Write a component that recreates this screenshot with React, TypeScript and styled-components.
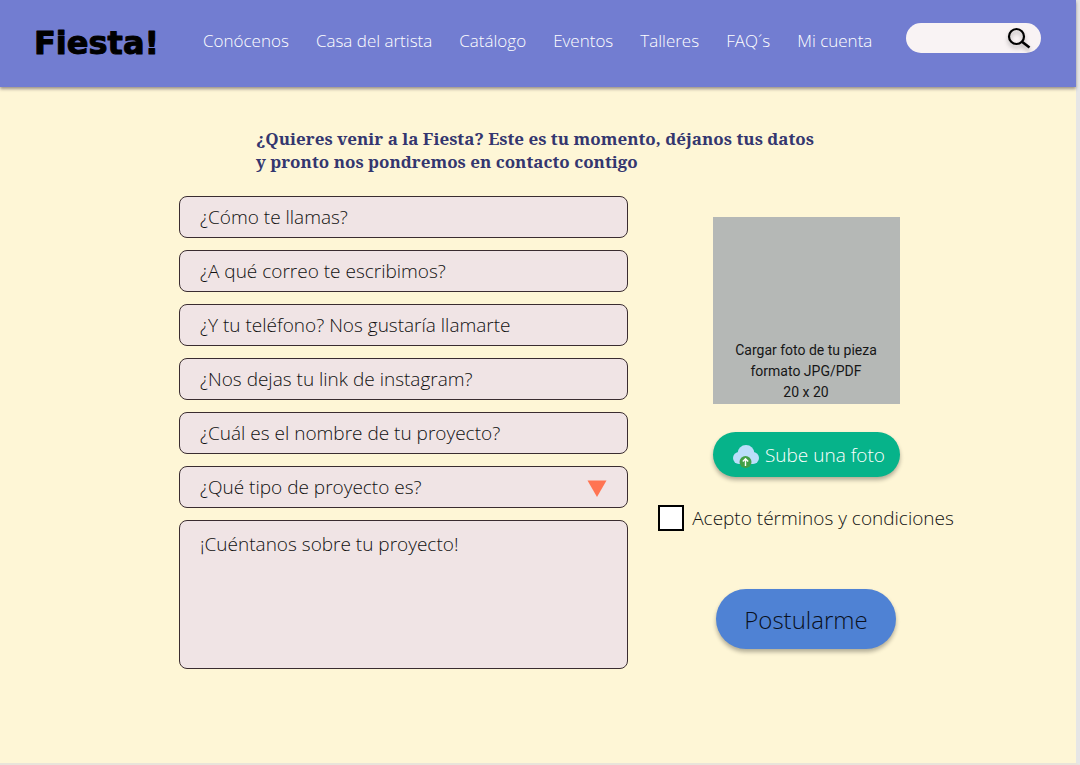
import React from "react";
import styled, { createGlobalStyle } from "styled-components";

const GlobalStyle = createGlobalStyle`
  *, *::before, *::after { box-sizing: border-box; }
  body { margin: 0; background: #fef6d6; }
  body, button, input, select, textarea { font-family: "Open Sans", sans-serif; font-weight: 300; }
`;

const Page = styled.div`
  min-height: 100vh;
  background: #fef6d6;
  border-right: 4px solid #e6e6e6;
  border-bottom: 2px solid #e9e4da;
`;

const Header = styled.header`
  display: flex;
  align-items: flex-start;
  height: 87px;
  padding: 0 35px 0 34px;
  background: #727dd1;
  box-shadow: 0 2px 3px rgba(60, 50, 60, 0.5);
`;

const Logo = styled.a`
  flex: 0 0 169px;
  padding-top: 14px;

  svg { display: block; }
  text {
    font-family: "DejaVu Sans", sans-serif;
    font-size: 32px;
    font-weight: 700;
    fill: #000;
    stroke: #000;
    stroke-width: 1px;
    stroke-linejoin: round;
  }
`;

const Nav = styled.nav`
  display: flex;
  gap: 27px;
  padding-top: 29px;
`;

const NavLink = styled.a`
  color: #fff;
  font-size: 17px;
  line-height: 24px;
  text-decoration: none;
  white-space: nowrap;
`;

const Search = styled.form`
  display: flex;
  align-items: center;
  width: 135px;
  height: 30px;
  margin: 23px 0 0 auto;
  padding: 0 10px 0 14px;
  border-radius: 15px;
  background: #f9f3f4;
`;

const SearchInput = styled.input`
  flex: 1;
  min-width: 0;
  padding: 0;
  border: 0;
  outline: 0;
  background: transparent;
  font-size: 14px;
`;

const SearchButton = styled.button`
  display: flex;
  padding: 0;
  border: 0;
  background: transparent;

  svg { filter: drop-shadow(0 3px 2px rgba(0, 0, 0, 0.3)); }
`;

const Main = styled.main`
  padding: 40px 124px 64px 179px;
`;

const Heading = styled.h1`
  margin: 0 0 23px;
  padding-left: 77px;
  color: #34366f;
  font-family: "Noto Serif", "Liberation Serif", serif;
  font-size: 17px;
  font-weight: 700;
  line-height: 23px;
`;

const Form = styled.form`
  display: grid;
  grid-template-columns: minmax(0, 1fr) 292px;
  gap: 32px;
`;

const Fields = styled.div`
  display: flex;
  flex-direction: column;
  gap: 12px;
`;

const fieldLook = `
  display: block;
  width: 100%;
  border: 1px solid #3a2c30;
  border-radius: 8px;
  background: #f0e4e5;
  color: #111;
  font-size: 19px;
  outline: 0;
`;

const Field = styled.input`
  ${fieldLook}
  height: 42px;
  padding: 0 20px;
  &::placeholder { color: #111; opacity: 1; }
`;

const SelectWrap = styled.div`
  position: relative;

  svg {
    position: absolute;
    top: 14px;
    right: 21px;
    pointer-events: none;
  }
`;

const Select = styled.select`
  ${fieldLook}
  height: 42px;
  padding: 0 48px 0 20px;
  appearance: none;
`;

const Story = styled.textarea`
  ${fieldLook}
  height: 149px;
  padding: 11px 20px;
  line-height: 24px;
  resize: none;
  &::placeholder { color: #111; opacity: 1; }
`;

const Side = styled.div`
  display: flex;
  flex-direction: column;
  align-items: center;
  padding-top: 21px;
`;

const PhotoBox = styled.div`
  display: flex;
  align-items: flex-end;
  justify-content: center;
  width: 187px;
  height: 187px;
  margin-bottom: 28px;
  padding-bottom: 1px;
  background: #b5b8b6;
  color: #161616;
  font-family: Roboto, sans-serif;
  font-size: 14px;
  font-weight: 400;
  line-height: 21px;
  text-align: center;
`;

const Pill = styled.button`
  display: flex;
  align-items: center;
  justify-content: center;
  border: 0;
  border-radius: 32px;
  box-shadow: 0 3px 4px rgba(0, 0, 0, 0.3);
`;

const UploadButton = styled(Pill)`
  gap: 5px;
  width: 187px;
  height: 45px;
  padding: 0 0 0 5px;
  background: #06b38a;
  color: #fff;
  font-size: 19px;
`;

const SubmitButton = styled(Pill)`
  width: 180px;
  height: 60px;
  background: #4f82d4;
  color: #0a1020;
  font-size: 24px;
`;

const Terms = styled.label`
  display: flex;
  align-items: center;
  gap: 8px;
  margin: 28px 0 58px;
  color: #111;
  font-size: 19px;
  line-height: 26px;
  white-space: nowrap;
`;

const Checkbox = styled.input`
  appearance: none;
  width: 26px;
  height: 26px;
  margin: 0;
  border: 2px solid #000;
  background: #fff;
  &:checked { background: #727dd1; }
`;

const SearchIcon = () => (
  <svg width="24" height="22" viewBox="0 0 24 22" fill="none" stroke="#000" aria-hidden="true">
    <circle cx="9.500" cy="9.500" r="7.500" strokeWidth="2.200" />
    <path d="M15 14.700 L22.500 20.500" strokeWidth="2.600" />
  </svg>
);

const CloudIcon = () => (
  <svg width="28" height="26" viewBox="0 0 28 26" aria-hidden="true">
    <g fill="#bbdefb">
      <circle cx="14" cy="11.500" r="8.500" />
      <circle cx="7" cy="16" r="6" />
      <circle cx="21" cy="16" r="6" />
      <rect x="7" y="13" width="14" height="9" />
    </g>
    <circle cx="13.500" cy="20" r="6" fill="#43a047" />
    <path d="M13.500 24V17M10.800 19.500L13.500 16.800L16.200 19.500" fill="none" stroke="#fff" strokeWidth="1.400" />
  </svg>
);

const links = ["Conócenos", "Casa del artista", "Catálogo", "Eventos", "Talleres", "FAQ´s", "Mi cuenta"];

const fields = [
  { type: "text", label: "¿Cómo te llamas?" },
  { type: "email", label: "¿A qué correo te escribimos?" },
  { type: "tel", label: "¿Y tu teléfono? Nos gustaría llamarte" },
  { type: "text", label: "¿Nos dejas tu link de instagram?" },
  { type: "text", label: "¿Cuál es el nombre de tu proyecto?" },
];

export default function App() {
  return (
    <>
      <GlobalStyle />
      <Page>
        <Header>
          <Logo href="#" aria-label="Fiesta!">
            <svg width="140" height="56" viewBox="0 0 140 56">
              <text x="0" y="40">Fiesta!</text>
            </svg>
          </Logo>
          <Nav>
            {links.map((name) => (
              <NavLink key={name} href="#">{name}</NavLink>
            ))}
          </Nav>
          <Search role="search">
            <SearchInput type="search" aria-label="Buscar" />
            <SearchButton type="button" aria-label="Buscar">
              <SearchIcon />
            </SearchButton>
          </Search>
        </Header>
        <Main>
          <Heading>
            ¿Quieres venir a la Fiesta? Este es tu momento, déjanos tus datos
            <br />y pronto nos pondremos en contacto contigo
          </Heading>
          <Form>
            <Fields>
              {fields.map(({ type, label }) => (
                <Field key={label} type={type} placeholder={label} aria-label={label} />
              ))}
              <SelectWrap>
                <Select aria-label="¿Qué tipo de proyecto es?">
                  <option>¿Qué tipo de proyecto es?</option>
                </Select>
                <svg width="20" height="17" viewBox="0 0 20 17" aria-hidden="true">
                  <path d="M0.500 0.500H19.500L10 17Z" fill="#ff7452" />
                </svg>
              </SelectWrap>
              <Story placeholder="¡Cuéntanos sobre tu proyecto!" aria-label="¡Cuéntanos sobre tu proyecto!" />
            </Fields>
            <Side>
              <PhotoBox>
                <div>
                  Cargar foto de tu pieza
                  <br />
                  formato JPG/PDF
                  <br />
                  20 x 20
                </div>
              </PhotoBox>
              <UploadButton type="button">
                <CloudIcon />
                Sube una foto
              </UploadButton>
              <Terms>
                <Checkbox type="checkbox" />
                Acepto términos y condiciones
              </Terms>
              <SubmitButton type="button">Postularme</SubmitButton>
            </Side>
          </Form>
        </Main>
      </Page>
    </>
  );
}
